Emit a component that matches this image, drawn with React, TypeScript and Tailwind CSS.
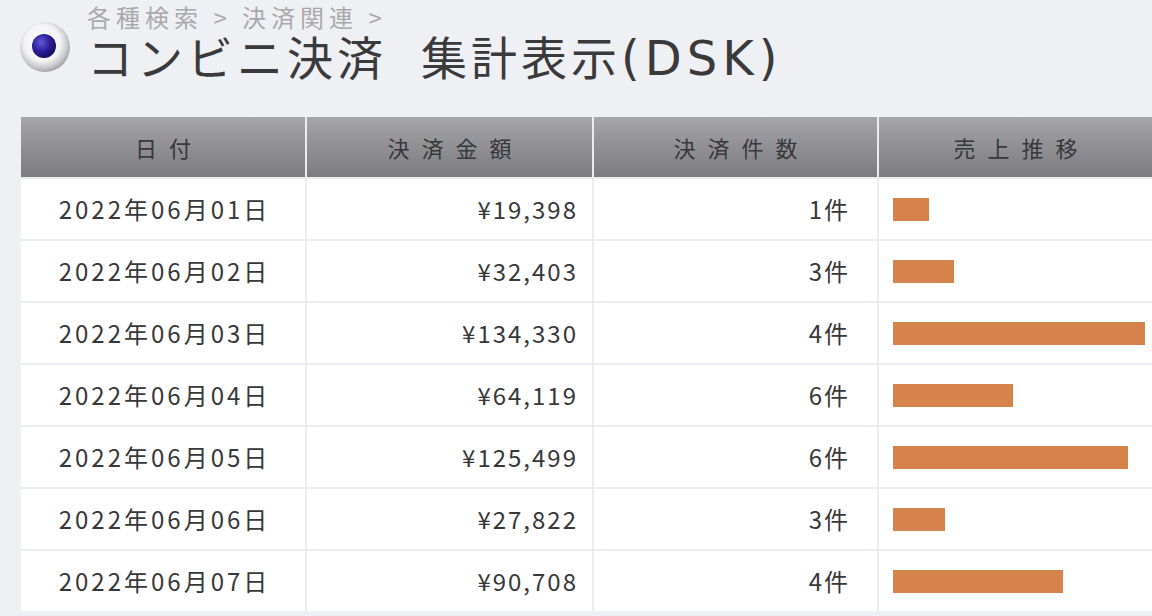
import React from "react";

const rows = [
  { d: "2022年06月01日", a: 19398, c: 1 },
  { d: "2022年06月02日", a: 32403, c: 3 },
  { d: "2022年06月03日", a: 134330, c: 4 },
  { d: "2022年06月04日", a: 64119, c: 6 },
  { d: "2022年06月05日", a: 125499, c: 6 },
  { d: "2022年06月06日", a: 27822, c: 3 },
  { d: "2022年06月07日", a: 90708, c: 4 },
];

const font = { fontFamily: '"Noto Sans CJK JP", "Noto Sans", sans-serif' };

function Bullet() {
  return (
    <svg width="54" height="54" viewBox="0 0 54 54">
      <defs>
        <radialGradient id="outer" cx="45%" cy="42%" r="58%">
          <stop offset="0%" stopColor="#ffffff" />
          <stop offset="62%" stopColor="#f3f3f5" />
          <stop offset="85%" stopColor="#c9c9ce" />
          <stop offset="100%" stopColor="#a5a5ab" />
        </radialGradient>
        <radialGradient id="inner" cx="38%" cy="35%" r="70%">
          <stop offset="0%" stopColor="#6257d8" />
          <stop offset="55%" stopColor="#2b1d98" />
          <stop offset="100%" stopColor="#150b58" />
        </radialGradient>
      </defs>
      <circle cx="27" cy="27" r="25" fill="url(#outer)" />
      <circle cx="26" cy="26" r="12" fill="url(#inner)" />
    </svg>
  );
}

export default function App() {
  return (
    <div className="w-[1152px] h-[616px] overflow-hidden bg-[#eff0f3] text-[#333]" style={font}>
      <div className="flex items-start pl-[18px] h-[117px]">
        <div className="mt-[20px]">
          <Bullet />
        </div>
        <div className="ml-[15px] flex flex-col pt-[5px]">
          <div className="text-[24px] leading-[24px] text-[#a9a9ac] tracking-[5px] whitespace-nowrap">
            各種検索 &gt; 決済関連 &gt;
          </div>
          <div className="flex items-baseline text-[46px] leading-[52px] text-[#3a3a3c] whitespace-nowrap">
            <span className="tracking-[4px]">コンビニ決済</span>
            <span className="ml-[34px] tracking-[4px]">集計表示</span>
            <span className="text-[48px] tracking-[5px]" style={{ fontFamily: '"DejaVu Sans", sans-serif' }}>
              (DSK)
            </span>
          </div>
        </div>
      </div>
      <div className="ml-[21px] grid grid-cols-[284px_285px_283px_1fr] gap-[2px] bg-[#eaecef]">
        {["日付", "決済金額", "決済件数", "売上推移"].map((h) => (
          <div
            key={h}
            className="h-[60px] flex items-center justify-center bg-gradient-to-b from-[#a6a6a9] via-[#909094] to-[#7c7c81] text-[22px] tracking-[12px] pl-[12px] text-[#38383b]"
          >
            {h}
          </div>
        ))}
        {rows.map((r) => (
          <React.Fragment key={r.d}>
            <div className="h-[60px] bg-white flex items-center justify-center pl-[3px] text-[24px] tracking-[3px] text-[#383838]">{r.d}</div>
            <div className="h-[60px] bg-white flex items-center justify-end pr-[14px] text-[24px] tracking-[2px] text-[#383838]">
              ¥{r.a.toLocaleString("en-US")}
            </div>
            <div className="h-[60px] bg-white flex items-center justify-end pr-[27px] text-[24px] tracking-[2px] text-[#383838]">{r.c}件</div>
            <div className="h-[60px] bg-white flex items-center pl-[14px]">
              <div className="h-[23px] bg-[#d5834b]" style={{ width: Math.round(r.a / 533) }} />
            </div>
          </React.Fragment>
        ))}
      </div>
    </div>
  );
}
